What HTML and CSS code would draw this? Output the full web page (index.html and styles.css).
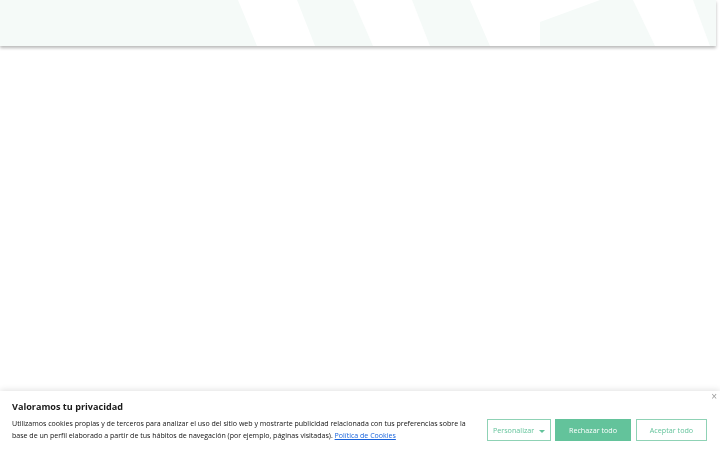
FILE: index.html
```html
<!DOCTYPE html>
<html lang="es">
<head>
  <meta charset="UTF-8" />
  <meta name="viewport" content="width=device-width, initial-scale=1" />
  <title>Valoramos tu privacidad</title>
  <link rel="stylesheet" href="styles.css">
</head>
<body>

<header class="top-bar">
  <svg class="top-pattern" viewBox="0 0 716 46" preserveAspectRatio="none">
    <polygon points="238,0 297,0 315,46 257,46" />
    <polygon points="353,0 412,0 430,46 373,46" />
    <polygon points="470,0 600,0 540,22 540,46 490,46" />
    <polygon points="633,0 693,0 710,46 655,46" />
  </svg>
</header>

<main class="page"></main>

<!-- cookie consent bar -->
<div class="cookie-bar">
  <button class="cookie-close" aria-label="Cerrar">&times;</button>
  <p class="cookie-title">Valoramos tu privacidad</p>
  <div class="cookie-row">
    <p class="cookie-text">
      Utilizamos cookies propias y de terceros para analizar el uso del sitio web y mostrarte publicidad relacionada con tus preferencias sobre la base de un perfil elaborado a partir de tus hábitos de navegación (por ejemplo, páginas visitadas). <a href="#">Política de Cookies</a>
    </p>
    <div class="cookie-actions">
      <button class="btn btn-outline btn-custom">Personalizar <span class="caret"></span></button>
      <button class="btn btn-fill">Rechazar todo</button>
      <button class="btn btn-outline btn-accept">Aceptar todo</button>
    </div>
  </div>
</div>

</body>
</html>
```

FILE: styles.css
```css
body {
  margin: 0;
  background: #fff;
  font-family: "Open Sans", Arial, sans-serif;
  color: #1a1a1a;
}
.top-bar {
  width: 716px;
  height: 46px;
  background: #f5faf8;
  box-shadow: 0 2px 3px rgba(0, 0, 0, 0.28);
}
.top-pattern {
  display: block;
  width: 100%;
  height: 100%;
}
.top-pattern polygon {
  fill: #fff;
}
.page {
  height: 300px;
}
.cookie-bar {
  position: fixed;
  left: 0;
  right: 0;
  bottom: 0;
  box-sizing: border-box;
  height: 59px;
  padding: 9px 13px 0 12px;
  background: #fff;
  box-shadow: 0 -1px 6px rgba(0, 0, 0, 0.12);
}
.cookie-close {
  position: absolute;
  top: 1px;
  right: 3px;
  border: 0;
  background: none;
  padding: 0;
  font-size: 10px;
  line-height: 10px;
  color: #9a9a9a;
  cursor: pointer;
}
.cookie-title {
  margin: 0;
  font-size: 9.1px;
  font-weight: 700;
  line-height: 13px;
}
.cookie-row {
  display: flex;
  align-items: center;
  margin-top: 4px;
}
.cookie-text {
  margin: 0;
  width: 458px;
  font-size: 7.05px;
  line-height: 12px;
  color: #111;
}
.cookie-text a {
  color: #1863dc;
}
.cookie-actions {
  display: flex;
  gap: 4px;
  margin-left: auto;
  margin-top: 2px;
}
.btn {
  height: 22px;
  padding: 0;
  font-family: inherit;
  font-size: 7.2px;
  border: 1.5px solid #63c39b;
  cursor: pointer;
}
.btn-outline {
  background: #fff;
  color: #63c39b;
  border-color: #8fd2b5;
}
.btn-custom {
  width: 64px;
}
.btn-accept {
  width: 71px;
  margin-left: 1px;
}
.btn-fill {
  width: 76px;
  background: #63c39b;
  color: #fff;
}
.caret {
  display: inline-block;
  margin-left: 3px;
  vertical-align: middle;
  border-left: 3px solid transparent;
  border-right: 3px solid transparent;
  border-top: 3px solid #63c39b;
}
```
